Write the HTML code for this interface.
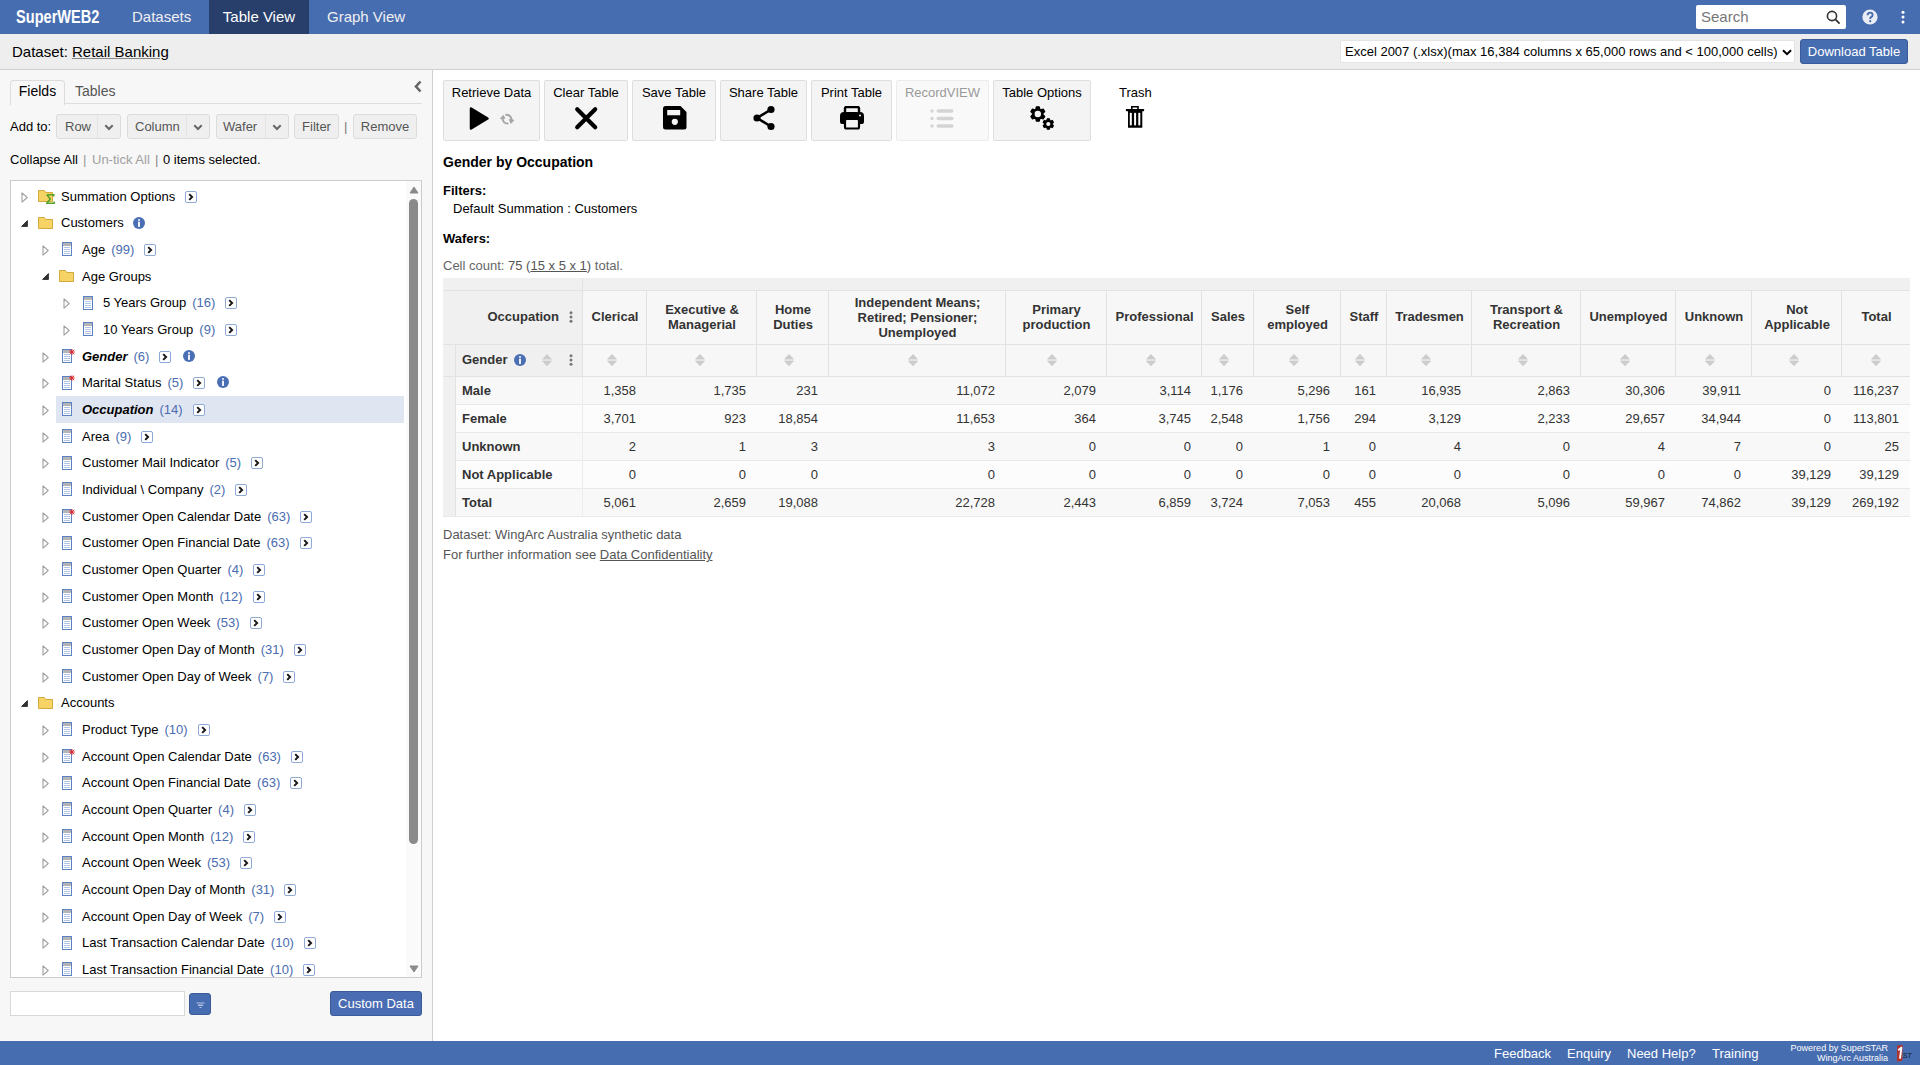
<!DOCTYPE html>
<html><head><meta charset="utf-8"><style>
*{box-sizing:border-box}
html,body{margin:0;padding:0;width:1920px;height:1065px;overflow:hidden;font-family:"Liberation Sans",sans-serif;font-size:13px;color:#000;background:#fff}
.a{position:absolute;white-space:nowrap}
#hdr{position:absolute;left:0;top:0;width:1920px;height:34px;background:#476db1}
#logo{position:absolute;left:16px;top:6px;font-size:18px;font-weight:bold;color:#fff;transform:scaleX(0.81);transform-origin:0 0;white-space:nowrap;line-height:22px}
.nav{position:absolute;top:0;height:34px;line-height:34px;font-size:15px;color:#f0f0f0;white-space:nowrap}
#search{position:absolute;left:1696px;top:5px;width:150px;height:24px;background:#fff;border-radius:2px}
#search span{position:absolute;left:5px;top:4px;font-size:15px;color:#777;line-height:16px}
#dbar{position:absolute;left:0;top:34px;width:1920px;height:36px;background:#eeeeee;border-bottom:1px solid #cfcfcf}
#dbar .ds{position:absolute;left:12px;top:9px;font-size:15px;line-height:18px;white-space:nowrap}
#dbar .ds u{text-decoration:underline;text-decoration-color:#888;text-underline-offset:1px}
#sel{position:absolute;left:1340px;top:5.5px;width:455px;height:23.5px;background:#fff;border:1px solid #e4e4e4;border-radius:2px;font-size:13px;line-height:22.5px;padding-left:4px;white-space:nowrap}
#dlbtn{position:absolute;left:1800px;top:5px;width:108px;height:25px;background:#476db1;border:1px solid #3a5a9a;border-radius:3px;color:#fff;font-size:13px;line-height:23px;text-align:center;white-space:nowrap}
#left{position:absolute;left:0;top:70px;width:433px;height:971px;background:#f7f7f7;border-right:1px solid #d0d0d0}
#right{position:absolute;left:433px;top:70px;width:1487px;height:970px;background:#fff}
#ftr{position:absolute;left:0;top:1041px;width:1920px;height:24px;background:#476db1}
.ftl{position:absolute;top:0;height:24px;line-height:25px;color:#fff;font-size:13px;white-space:nowrap}
.tab{position:absolute;top:10px;height:24px;line-height:21px;font-size:14px}
.sbtn{position:absolute;top:44px;height:25px;background:#efefef;border:1px solid #dcdcdc;border-radius:3px;color:#555;font-size:13px;line-height:23px;text-align:center}
#tree{position:absolute;left:10px;top:110px;width:412px;height:798px;background:#fff;border:1px solid #cccccc;overflow:hidden}
.row{position:absolute;left:0;width:395px;height:26.6667px;line-height:26.6667px;font-size:13px;white-space:nowrap}
.row .t{position:absolute;top:0.5px}
.row .c{color:#4a6cb0;margin-left:6px}
.row svg{position:absolute}
.th{font-weight:bold;color:#333;text-align:center;white-space:nowrap}
.td{height:28px;line-height:29px;color:#333;white-space:nowrap}
.tbtn{border-radius:2px;font-size:13px}
</style></head><body>
<svg width="0" height="0" style="position:absolute">
<defs>
<symbol id="tri-o" viewBox="0 0 7 11"><path d="M1 0.9 L6.2 5.5 L1 10.1 Z" fill="none" stroke="#a0a0a0" stroke-width="1.1" stroke-linejoin="round"/></symbol>
<symbol id="tri-f" viewBox="0 0 7 7"><path d="M0.6 6.4 L6.4 6.4 L6.4 0.6 Z" fill="#333" stroke="#333" stroke-width="1" stroke-linejoin="round"/></symbol>
<symbol id="fold" viewBox="0 0 15 12"><path d="M0.5 0.5 H6.3 L7.8 2.5 H14.5 V11.5 H0.5 Z" fill="#f6d365" stroke="#d2a93a" stroke-width="1"/></symbol>
<symbol id="fld" viewBox="0 0 10 14"><rect x="0.5" y="0.5" width="9" height="13" fill="#fff" stroke="#5b80c4"/><rect x="1" y="1" width="8" height="3" fill="#b4b4b4"/><path d="M2 5.5H8M2 7.5H8M2 9.5H8M2 11.5H8" stroke="#9fb6e0" stroke-width="0.8"/></symbol>
<symbol id="ast" viewBox="0 0 6 6"><path d="M3 0.2V5.8M0.2 3H5.8M0.8 0.8L5.2 5.2M5.2 0.8L0.8 5.2" stroke="#e32222" stroke-width="0.9"/><circle cx="3" cy="3" r="1.1" fill="#e32222"/></symbol>
<symbol id="btn" viewBox="0 0 12 12"><rect x="0.5" y="0.5" width="11" height="11" rx="1.5" fill="#fff" stroke="#8ea8d8"/><path d="M4.2 3.1 L7.1 6 L4.2 8.9" fill="none" stroke="#1a1a1a" stroke-width="2"/></symbol>
<symbol id="info" viewBox="0 0 12 12"><circle cx="6" cy="6" r="6" fill="#4a6fb5"/><rect x="5.1" y="2.2" width="1.8" height="1.6" fill="#fff"/><rect x="5.1" y="4.7" width="1.8" height="5.2" fill="#fff"/></symbol>
<symbol id="sort" viewBox="0 0 10 12"><rect x="0.3" y="5.3" width="9.4" height="1.6" fill="#e3e3e3"/><path d="M5 0 L10 5.3 H0 Z M0 6.9 H10 L5 12.2 Z" fill="#cccccc"/></symbol>
<symbol id="kebab" viewBox="0 0 4 12"><circle cx="2" cy="1.7" r="1.5" fill="#777"/><circle cx="2" cy="6" r="1.5" fill="#777"/><circle cx="2" cy="10.3" r="1.5" fill="#777"/></symbol>
</defs></svg>
<div id="hdr">
  <div id="logo">SuperWEB2</div>
  <div class="nav" style="left:132px">Datasets</div>
  <div class="nav" style="left:209px;width:100px;background:#283f6b;text-align:center;color:#fff">Table View</div>
  <div class="nav" style="left:327px">Graph View</div>
  <div id="search"><span>Search</span><svg class="a" style="left:130px;top:5px" width="15" height="15" viewBox="0 0 15 15"><circle cx="6" cy="6" r="4.6" fill="none" stroke="#333" stroke-width="1.6"/><path d="M9.4 9.4 L13.6 13.6" stroke="#333" stroke-width="1.8"/></svg></div>
  <svg class="a" style="left:1862px;top:9px" width="16" height="16" viewBox="0 0 16 16"><circle cx="8" cy="8" r="7.6" fill="#e9edf6"/><path d="M5.6 6.2 Q5.6 3.6 8.1 3.6 Q10.6 3.6 10.6 5.9 Q10.6 7.3 9.1 8.1 Q8.2 8.6 8.2 9.9" fill="none" stroke="#476db1" stroke-width="1.9"/><circle cx="8.2" cy="12.2" r="1.1" fill="#476db1"/></svg>
  <svg class="a" style="left:1901px;top:10px" width="4" height="14" viewBox="0 0 4 14"><circle cx="2" cy="2.3" r="1.5" fill="#fff"/><circle cx="2" cy="7.1" r="1.5" fill="#fff"/><circle cx="2" cy="11.9" r="1.5" fill="#fff"/></svg>
</div>
<div id="dbar">
  <div class="ds">Dataset: <u>Retail Banking</u></div>
  <div id="sel">Excel 2007 (.xlsx)(max 16,384 columns x 65,000 rows and &lt; 100,000 cells)<svg class="a" style="left:441px;top:8px" width="10" height="7" viewBox="0 0 10 7"><path d="M1 1.2 L5 5.2 L9 1.2" fill="none" stroke="#000" stroke-width="2"/></svg></div>
  <div id="dlbtn">Download Table</div>
</div>

<div id="left">
 <div class="a" style="left:10px;top:33px;width:412px;height:1px;background:#dedede"></div>
 <div class="tab" style="left:10px;width:55px;border:1px solid #dcdcdc;border-bottom:none;border-radius:4px 4px 0 0;background:#f7f7f7;text-align:center;height:25px">Fields</div>
 <div class="tab" style="left:75px;top:11px;color:#555">Tables</div>
 <svg class="a" style="left:413px;top:10px" width="10" height="13" viewBox="0 0 10 13"><path d="M7.5 1.5 L3 6.5 L7.5 11.5" fill="none" stroke="#666" stroke-width="2.6"/></svg>
 <div class="a" style="left:10px;top:44px;line-height:25px">Add to:</div>
 <div class="sbtn" style="left:56px;width:65px"><span style="position:absolute;left:8px">Row</span><span style="position:absolute;left:40px;top:-1px;width:1px;height:25px;background:#e3e3e3"></span><svg style="position:absolute;left:47px;top:9px" width="10" height="7" viewBox="0 0 10 7"><path d="M1.3 1.3 L5 5 L8.7 1.3" fill="none" stroke="#666" stroke-width="2"/></svg></div>
 <div class="sbtn" style="left:127px;width:83px"><span style="position:absolute;left:7px">Column</span><span style="position:absolute;left:58px;top:-1px;width:1px;height:25px;background:#e3e3e3"></span><svg style="position:absolute;left:65px;top:9px" width="10" height="7" viewBox="0 0 10 7"><path d="M1.3 1.3 L5 5 L8.7 1.3" fill="none" stroke="#666" stroke-width="2"/></svg></div>
 <div class="sbtn" style="left:216px;width:73px"><span style="position:absolute;left:6px">Wafer</span><span style="position:absolute;left:48px;top:-1px;width:1px;height:25px;background:#e3e3e3"></span><svg style="position:absolute;left:55px;top:9px" width="10" height="7" viewBox="0 0 10 7"><path d="M1.3 1.3 L5 5 L8.7 1.3" fill="none" stroke="#666" stroke-width="2"/></svg></div>
 <div class="sbtn" style="left:294px;width:45px">Filter</div>
 <div class="a" style="left:344px;top:44px;line-height:25px;color:#777">|</div>
 <div class="sbtn" style="left:353px;width:64px">Remove</div>
 <div class="a" style="left:10px;top:81px;line-height:18px">Collapse All</div><div class="a" style="left:83px;top:81px;line-height:18px;color:#999">|</div><div class="a" style="left:92px;top:81px;line-height:18px;color:#a0a0a0">Un-tick All</div><div class="a" style="left:155px;top:81px;line-height:18px;color:#888">|</div><div class="a" style="left:163px;top:81px;line-height:18px">0 items selected.</div>
 <div id="tree">
 <div class="row" style="top:2.0000px"><svg style="left:9.5px;top:8.8px" width="7" height="11"><use href="#tri-o"/></svg><svg style="left:27px;top:7.2px" width="15" height="12"><use href="#fold"/></svg><svg style="left:34.5px;top:10.5px" width="9" height="10" viewBox="0 0 9 10"><path d="M0.8 0.8H7.8V2.4M0.8 0.8L4.3 5L0.8 9.2H8.2V7.4" fill="none" stroke="#55a02a" stroke-width="1.5"/></svg><div class="t" style="left:50px"><span style="">Summation Options</span><svg width="12" height="12" style="position:relative;display:inline-block;vertical-align:-2px;margin-left:10px"><use href="#btn"/></svg></div></div>
<div class="row" style="top:28.6667px"><svg style="left:10px;top:10.3px" width="7" height="7"><use href="#tri-f"/></svg><svg style="left:27px;top:7.2px" width="15" height="12"><use href="#fold"/></svg><div class="t" style="left:50px"><span style="">Customers</span><svg width="12" height="12" style="position:relative;display:inline-block;vertical-align:-2px;margin-left:9px"><use href="#info"/></svg></div></div>
<div class="row" style="top:55.3334px"><svg style="left:30.5px;top:8.8px" width="7" height="11"><use href="#tri-o"/></svg><svg style="left:51px;top:6px" width="10" height="14"><use href="#fld"/></svg><div class="t" style="left:71px"><span style="">Age</span><span class="c">(99)</span><svg width="12" height="12" style="position:relative;display:inline-block;vertical-align:-2px;margin-left:10px"><use href="#btn"/></svg></div></div>
<div class="row" style="top:82.0001px"><svg style="left:31px;top:10.3px" width="7" height="7"><use href="#tri-f"/></svg><svg style="left:48px;top:7.2px" width="15" height="12"><use href="#fold"/></svg><div class="t" style="left:71px"><span style="">Age Groups</span></div></div>
<div class="row" style="top:108.6668px"><svg style="left:51.5px;top:8.8px" width="7" height="11"><use href="#tri-o"/></svg><svg style="left:72px;top:6px" width="10" height="14"><use href="#fld"/></svg><div class="t" style="left:92px"><span style="">5 Years Group</span><span class="c">(16)</span><svg width="12" height="12" style="position:relative;display:inline-block;vertical-align:-2px;margin-left:10px"><use href="#btn"/></svg></div></div>
<div class="row" style="top:135.3335px"><svg style="left:51.5px;top:8.8px" width="7" height="11"><use href="#tri-o"/></svg><svg style="left:72px;top:6px" width="10" height="14"><use href="#fld"/></svg><div class="t" style="left:92px"><span style="">10 Years Group</span><span class="c">(9)</span><svg width="12" height="12" style="position:relative;display:inline-block;vertical-align:-2px;margin-left:10px"><use href="#btn"/></svg></div></div>
<div class="row" style="top:162.0002px"><svg style="left:30.5px;top:8.8px" width="7" height="11"><use href="#tri-o"/></svg><svg style="left:51px;top:6px" width="10" height="14"><use href="#fld"/></svg><svg style="left:58px;top:5.6px" width="6" height="6"><use href="#ast"/></svg><div class="t" style="left:71px"><span style="font-weight:bold;font-style:italic;">Gender</span><span class="c">(6)</span><svg width="12" height="12" style="position:relative;display:inline-block;vertical-align:-2px;margin-left:10px"><use href="#btn"/></svg><svg width="12" height="12" style="position:relative;display:inline-block;vertical-align:-1px;margin-left:12px"><use href="#info"/></svg></div></div>
<div class="row" style="top:188.6669px"><svg style="left:30.5px;top:8.8px" width="7" height="11"><use href="#tri-o"/></svg><svg style="left:51px;top:6px" width="10" height="14"><use href="#fld"/></svg><svg style="left:58px;top:5.6px" width="6" height="6"><use href="#ast"/></svg><div class="t" style="left:71px"><span style="">Marital Status</span><span class="c">(5)</span><svg width="12" height="12" style="position:relative;display:inline-block;vertical-align:-2px;margin-left:10px"><use href="#btn"/></svg><svg width="12" height="12" style="position:relative;display:inline-block;vertical-align:-1px;margin-left:12px"><use href="#info"/></svg></div></div>
<div class="row" style="top:215.3336px"><div style="position:absolute;left:45px;top:-0.3335999999999899px;width:348px;height:26.5px;background:#dfe6f2"></div><svg style="left:30.5px;top:8.8px" width="7" height="11"><use href="#tri-o"/></svg><svg style="left:51px;top:6px" width="10" height="14"><use href="#fld"/></svg><div class="t" style="left:71px"><span style="font-weight:bold;font-style:italic;">Occupation</span><span class="c">(14)</span><svg width="12" height="12" style="position:relative;display:inline-block;vertical-align:-2px;margin-left:10px"><use href="#btn"/></svg></div></div>
<div class="row" style="top:242.0003px"><svg style="left:30.5px;top:8.8px" width="7" height="11"><use href="#tri-o"/></svg><svg style="left:51px;top:6px" width="10" height="14"><use href="#fld"/></svg><div class="t" style="left:71px"><span style="">Area</span><span class="c">(9)</span><svg width="12" height="12" style="position:relative;display:inline-block;vertical-align:-2px;margin-left:10px"><use href="#btn"/></svg></div></div>
<div class="row" style="top:268.6670px"><svg style="left:30.5px;top:8.8px" width="7" height="11"><use href="#tri-o"/></svg><svg style="left:51px;top:6px" width="10" height="14"><use href="#fld"/></svg><div class="t" style="left:71px"><span style="">Customer Mail Indicator</span><span class="c">(5)</span><svg width="12" height="12" style="position:relative;display:inline-block;vertical-align:-2px;margin-left:10px"><use href="#btn"/></svg></div></div>
<div class="row" style="top:295.3337px"><svg style="left:30.5px;top:8.8px" width="7" height="11"><use href="#tri-o"/></svg><svg style="left:51px;top:6px" width="10" height="14"><use href="#fld"/></svg><div class="t" style="left:71px"><span style="">Individual \ Company</span><span class="c">(2)</span><svg width="12" height="12" style="position:relative;display:inline-block;vertical-align:-2px;margin-left:10px"><use href="#btn"/></svg></div></div>
<div class="row" style="top:322.0004px"><svg style="left:30.5px;top:8.8px" width="7" height="11"><use href="#tri-o"/></svg><svg style="left:51px;top:6px" width="10" height="14"><use href="#fld"/></svg><svg style="left:58px;top:5.6px" width="6" height="6"><use href="#ast"/></svg><div class="t" style="left:71px"><span style="">Customer Open Calendar Date</span><span class="c">(63)</span><svg width="12" height="12" style="position:relative;display:inline-block;vertical-align:-2px;margin-left:10px"><use href="#btn"/></svg></div></div>
<div class="row" style="top:348.6671px"><svg style="left:30.5px;top:8.8px" width="7" height="11"><use href="#tri-o"/></svg><svg style="left:51px;top:6px" width="10" height="14"><use href="#fld"/></svg><div class="t" style="left:71px"><span style="">Customer Open Financial Date</span><span class="c">(63)</span><svg width="12" height="12" style="position:relative;display:inline-block;vertical-align:-2px;margin-left:10px"><use href="#btn"/></svg></div></div>
<div class="row" style="top:375.3338px"><svg style="left:30.5px;top:8.8px" width="7" height="11"><use href="#tri-o"/></svg><svg style="left:51px;top:6px" width="10" height="14"><use href="#fld"/></svg><div class="t" style="left:71px"><span style="">Customer Open Quarter</span><span class="c">(4)</span><svg width="12" height="12" style="position:relative;display:inline-block;vertical-align:-2px;margin-left:10px"><use href="#btn"/></svg></div></div>
<div class="row" style="top:402.0005px"><svg style="left:30.5px;top:8.8px" width="7" height="11"><use href="#tri-o"/></svg><svg style="left:51px;top:6px" width="10" height="14"><use href="#fld"/></svg><div class="t" style="left:71px"><span style="">Customer Open Month</span><span class="c">(12)</span><svg width="12" height="12" style="position:relative;display:inline-block;vertical-align:-2px;margin-left:10px"><use href="#btn"/></svg></div></div>
<div class="row" style="top:428.6672px"><svg style="left:30.5px;top:8.8px" width="7" height="11"><use href="#tri-o"/></svg><svg style="left:51px;top:6px" width="10" height="14"><use href="#fld"/></svg><div class="t" style="left:71px"><span style="">Customer Open Week</span><span class="c">(53)</span><svg width="12" height="12" style="position:relative;display:inline-block;vertical-align:-2px;margin-left:10px"><use href="#btn"/></svg></div></div>
<div class="row" style="top:455.3339px"><svg style="left:30.5px;top:8.8px" width="7" height="11"><use href="#tri-o"/></svg><svg style="left:51px;top:6px" width="10" height="14"><use href="#fld"/></svg><div class="t" style="left:71px"><span style="">Customer Open Day of Month</span><span class="c">(31)</span><svg width="12" height="12" style="position:relative;display:inline-block;vertical-align:-2px;margin-left:10px"><use href="#btn"/></svg></div></div>
<div class="row" style="top:482.0006px"><svg style="left:30.5px;top:8.8px" width="7" height="11"><use href="#tri-o"/></svg><svg style="left:51px;top:6px" width="10" height="14"><use href="#fld"/></svg><div class="t" style="left:71px"><span style="">Customer Open Day of Week</span><span class="c">(7)</span><svg width="12" height="12" style="position:relative;display:inline-block;vertical-align:-2px;margin-left:10px"><use href="#btn"/></svg></div></div>
<div class="row" style="top:508.6673px"><svg style="left:10px;top:10.3px" width="7" height="7"><use href="#tri-f"/></svg><svg style="left:27px;top:7.2px" width="15" height="12"><use href="#fold"/></svg><div class="t" style="left:50px"><span style="">Accounts</span></div></div>
<div class="row" style="top:535.3340px"><svg style="left:30.5px;top:8.8px" width="7" height="11"><use href="#tri-o"/></svg><svg style="left:51px;top:6px" width="10" height="14"><use href="#fld"/></svg><div class="t" style="left:71px"><span style="">Product Type</span><span class="c">(10)</span><svg width="12" height="12" style="position:relative;display:inline-block;vertical-align:-2px;margin-left:10px"><use href="#btn"/></svg></div></div>
<div class="row" style="top:562.0007px"><svg style="left:30.5px;top:8.8px" width="7" height="11"><use href="#tri-o"/></svg><svg style="left:51px;top:6px" width="10" height="14"><use href="#fld"/></svg><svg style="left:58px;top:5.6px" width="6" height="6"><use href="#ast"/></svg><div class="t" style="left:71px"><span style="">Account Open Calendar Date</span><span class="c">(63)</span><svg width="12" height="12" style="position:relative;display:inline-block;vertical-align:-2px;margin-left:10px"><use href="#btn"/></svg></div></div>
<div class="row" style="top:588.6674px"><svg style="left:30.5px;top:8.8px" width="7" height="11"><use href="#tri-o"/></svg><svg style="left:51px;top:6px" width="10" height="14"><use href="#fld"/></svg><div class="t" style="left:71px"><span style="">Account Open Financial Date</span><span class="c">(63)</span><svg width="12" height="12" style="position:relative;display:inline-block;vertical-align:-2px;margin-left:10px"><use href="#btn"/></svg></div></div>
<div class="row" style="top:615.3341px"><svg style="left:30.5px;top:8.8px" width="7" height="11"><use href="#tri-o"/></svg><svg style="left:51px;top:6px" width="10" height="14"><use href="#fld"/></svg><div class="t" style="left:71px"><span style="">Account Open Quarter</span><span class="c">(4)</span><svg width="12" height="12" style="position:relative;display:inline-block;vertical-align:-2px;margin-left:10px"><use href="#btn"/></svg></div></div>
<div class="row" style="top:642.0008px"><svg style="left:30.5px;top:8.8px" width="7" height="11"><use href="#tri-o"/></svg><svg style="left:51px;top:6px" width="10" height="14"><use href="#fld"/></svg><div class="t" style="left:71px"><span style="">Account Open Month</span><span class="c">(12)</span><svg width="12" height="12" style="position:relative;display:inline-block;vertical-align:-2px;margin-left:10px"><use href="#btn"/></svg></div></div>
<div class="row" style="top:668.6675px"><svg style="left:30.5px;top:8.8px" width="7" height="11"><use href="#tri-o"/></svg><svg style="left:51px;top:6px" width="10" height="14"><use href="#fld"/></svg><div class="t" style="left:71px"><span style="">Account Open Week</span><span class="c">(53)</span><svg width="12" height="12" style="position:relative;display:inline-block;vertical-align:-2px;margin-left:10px"><use href="#btn"/></svg></div></div>
<div class="row" style="top:695.3342px"><svg style="left:30.5px;top:8.8px" width="7" height="11"><use href="#tri-o"/></svg><svg style="left:51px;top:6px" width="10" height="14"><use href="#fld"/></svg><div class="t" style="left:71px"><span style="">Account Open Day of Month</span><span class="c">(31)</span><svg width="12" height="12" style="position:relative;display:inline-block;vertical-align:-2px;margin-left:10px"><use href="#btn"/></svg></div></div>
<div class="row" style="top:722.0009px"><svg style="left:30.5px;top:8.8px" width="7" height="11"><use href="#tri-o"/></svg><svg style="left:51px;top:6px" width="10" height="14"><use href="#fld"/></svg><div class="t" style="left:71px"><span style="">Account Open Day of Week</span><span class="c">(7)</span><svg width="12" height="12" style="position:relative;display:inline-block;vertical-align:-2px;margin-left:10px"><use href="#btn"/></svg></div></div>
<div class="row" style="top:748.6676px"><svg style="left:30.5px;top:8.8px" width="7" height="11"><use href="#tri-o"/></svg><svg style="left:51px;top:6px" width="10" height="14"><use href="#fld"/></svg><div class="t" style="left:71px"><span style="">Last Transaction Calendar Date</span><span class="c">(10)</span><svg width="12" height="12" style="position:relative;display:inline-block;vertical-align:-2px;margin-left:10px"><use href="#btn"/></svg></div></div>
<div class="row" style="top:775.3343px"><svg style="left:30.5px;top:8.8px" width="7" height="11"><use href="#tri-o"/></svg><svg style="left:51px;top:6px" width="10" height="14"><use href="#fld"/></svg><div class="t" style="left:71px"><span style="">Last Transaction Financial Date</span><span class="c">(10)</span><svg width="12" height="12" style="position:relative;display:inline-block;vertical-align:-2px;margin-left:10px"><use href="#btn"/></svg></div></div>
 <div class="a" style="left:395px;top:0;width:15px;height:796px;background:#fafafa"></div>
 <svg class="a" style="left:398px;top:5px" width="10" height="8" viewBox="0 0 10 8"><path d="M5 1 L9 7 H1 Z" fill="#8a8a8a" stroke="#8a8a8a" stroke-linejoin="round"/></svg>
 <div class="a" style="left:398px;top:18px;width:9px;height:645px;background:#8a8a8a;border-radius:4.5px"></div>
 <svg class="a" style="left:398px;top:784px" width="10" height="8" viewBox="0 0 10 8"><path d="M1 1 H9 L5 7 Z" fill="#8a8a8a" stroke="#8a8a8a" stroke-linejoin="round"/></svg>
 </div>
 <div class="a" style="left:10px;top:921px;width:175px;height:25px;background:#fff;border:1px solid #d8d8d8"></div>
 <div class="a" style="left:189px;top:923px;width:22px;height:22px;background:#476db1;border-radius:3px;border:1px solid #3a5a9a"><svg class="a" style="left:6px;top:8px" width="9" height="7" viewBox="0 0 9 7"><path d="M0.5 0.5H8.5V1.5H0.5Z M2 2.5H7V4H2Z M3.5 5H5.5V6H3.5Z" fill="#b0c2e4"/></svg></div>
 <div class="a" style="left:330px;top:921px;width:92px;height:25px;background:#4a6cb2;border:1px solid #3a5a9a;border-radius:3px;color:#fff;text-align:center;line-height:23px">Custom Data</div>
</div>
<div id="right"></div>

<div class="a tbtn" style="left:443px;top:80px;width:97px;height:61px;background:#f4f4f4;border:1px solid #dedede;color:#000"><div style="position:absolute;left:0;right:0;top:4px;text-align:center;line-height:15px">Retrieve Data</div><svg class="a" style="left:24px;top:25px" width="22" height="25" viewBox="0 0 22 25"><path d="M3 2.5 L19.5 12.5 L3 22.5 Z" fill="#000" stroke="#000" stroke-width="2.5" stroke-linejoin="round"/></svg><svg class="a" style="left:56px;top:32px" width="15" height="12" viewBox="0 0 15 12"><path d="M6.2 1.7 Q10.8 1.6 11.6 6.6" fill="none" stroke="#a6a6a6" stroke-width="1.9" stroke-linecap="round"/><path d="M9.2 6.4 L14 7.2 L10.9 10.4 Z" fill="#a6a6a6" stroke="#a6a6a6" stroke-width="0.8" stroke-linejoin="round"/><path d="M7.6 10.5 Q3.1 10.5 2.5 5.5" fill="none" stroke="#a6a6a6" stroke-width="1.9" stroke-linecap="round"/><path d="M0.3 5.6 L3.4 2.3 L4.9 5.5 Z" fill="#a6a6a6" stroke="#a6a6a6" stroke-width="0.8" stroke-linejoin="round"/></svg></div>
<div class="a tbtn" style="left:544px;top:80px;width:84px;height:61px;background:#f4f4f4;border:1px solid #dedede;color:#000"><div style="position:absolute;left:0;right:0;top:4px;text-align:center;line-height:15px">Clear Table</div><svg class="a" style="left:29px;top:25px" width="25" height="25" viewBox="0 0 25 25"><path d="M3.2 3.2 L21.2 21.2 M21.2 3.2 L3.2 21.2" stroke="#000" stroke-width="4.2" stroke-linecap="round"/></svg></div>
<div class="a tbtn" style="left:632px;top:80px;width:84px;height:61px;background:#f4f4f4;border:1px solid #dedede;color:#000"><div style="position:absolute;left:0;right:0;top:4px;text-align:center;line-height:15px">Save Table</div><svg class="a" style="left:30px;top:25px" width="24" height="24" viewBox="0 0 24 24"><path d="M0 2.5 Q0 0 2.5 0 H17.5 L23.5 6 V21 Q23.5 23.5 21 23.5 H2.5 Q0 23.5 0 21 Z" fill="#000"/><rect x="4.2" y="4" width="13" height="5.3" rx="0.5" fill="#f4f4f4"/><circle cx="11.8" cy="15.8" r="3.1" fill="#f4f4f4"/></svg></div>
<div class="a tbtn" style="left:720px;top:80px;width:87px;height:61px;background:#f4f4f4;border:1px solid #dedede;color:#000"><div style="position:absolute;left:0;right:0;top:4px;text-align:center;line-height:15px">Share Table</div><svg class="a" style="left:31px;top:24px" width="24" height="26" viewBox="0 0 24 26"><path d="M19 4.5 L5 13 L19 21.5" fill="none" stroke="#000" stroke-width="2.6"/><circle cx="19" cy="4.5" r="3.6" fill="#000"/><circle cx="5" cy="13" r="3.6" fill="#000"/><circle cx="19" cy="21.5" r="3.6" fill="#000"/></svg></div>
<div class="a tbtn" style="left:811px;top:80px;width:81px;height:61px;background:#f4f4f4;border:1px solid #dedede;color:#000"><div style="position:absolute;left:0;right:0;top:4px;text-align:center;line-height:15px">Print Table</div><svg class="a" style="left:27px;top:25px" width="26" height="24" viewBox="0 0 26 24"><path d="M6 6 V2.5 Q6 1 7.5 1 H18.5 Q20 1 20 2.5 V6" fill="none" stroke="#000" stroke-width="2.4"/><path d="M1 10 Q1 6 5 6 H21 Q25 6 25 10 V16 Q25 18 23 18 H3 Q1 18 1 16 Z" fill="#000"/><rect x="6" y="13" width="14" height="9.5" rx="1.5" fill="#f4f4f4" stroke="#000" stroke-width="2.2"/><circle cx="21" cy="9.5" r="1" fill="#f4f4f4"/></svg></div>
<div class="a tbtn" style="left:896px;top:80px;width:93px;height:61px;background:#f9f9f9;border:1px solid #ececec;color:#999"><div style="position:absolute;left:0;right:0;top:4px;text-align:center;line-height:15px">RecordVIEW</div><svg class="a" style="left:33px;top:28px" width="25" height="20" viewBox="0 0 25 20"><g fill="#d4d4d4"><circle cx="2" cy="2" r="1.7"/><circle cx="2" cy="9.5" r="1.7"/><circle cx="2" cy="17" r="1.7"/><rect x="6.5" y="0.3" width="17" height="3.4" rx="1.7"/><rect x="6.5" y="7.8" width="17" height="3.4" rx="1.7"/><rect x="6.5" y="15.3" width="17" height="3.4" rx="1.7"/></g></svg></div>
<div class="a tbtn" style="left:993px;top:80px;width:98px;height:61px;background:#f4f4f4;border:1px solid #dedede;color:#000"><div style="position:absolute;left:0;right:0;top:4px;text-align:center;line-height:15px">Table Options</div><svg class="a" style="left:36px;top:25px" width="26" height="26" viewBox="0 0 26 26"><path d="M5.69 3.47 L6.41 0.83 L9.19 0.83 L9.91 3.47 L10.67 3.90 L13.31 3.21 L14.70 5.62 L12.78 7.56 L12.78 8.44 L14.70 10.38 L13.31 12.79 L10.67 12.10 L9.91 12.53 L9.19 15.17 L6.41 15.17 L5.69 12.53 L4.93 12.10 L2.29 12.79 L0.90 10.38 L2.82 8.44 L2.82 7.56 L0.90 5.62 L2.29 3.21 L4.93 3.90 Z" fill="#000" stroke="#000" stroke-width="1.3" stroke-linejoin="round"/><circle cx="7.8" cy="8" r="4.8" fill="#000"/><circle cx="7.8" cy="8" r="3.2" fill="#f4f4f4"/><path d="M16.78 14.74 L17.29 12.80 L19.31 12.80 L19.82 14.74 L20.36 15.05 L22.30 14.52 L23.31 16.27 L21.89 17.69 L21.89 18.31 L23.31 19.73 L22.30 21.48 L20.36 20.95 L19.82 21.26 L19.31 23.20 L17.29 23.20 L16.78 21.26 L16.24 20.95 L14.30 21.48 L13.29 19.73 L14.71 18.31 L14.71 17.69 L13.29 16.27 L14.30 14.52 L16.24 15.05 Z" fill="#000" stroke="#000" stroke-width="1.3" stroke-linejoin="round"/><circle cx="18.3" cy="18" r="3.4" fill="#000"/><circle cx="18.3" cy="18" r="2.1" fill="#f4f4f4"/></svg></div>
<div class="a" style="left:1119px;top:85px;line-height:15px">Trash</div><svg class="a" style="left:1124px;top:105px" width="22" height="24" viewBox="0 0 22 24"><rect x="1.9" y="4" width="18.2" height="2.2" rx="0.6" fill="#000"/><path d="M7.8 4.5 V1.8 H14 V4.5" fill="none" stroke="#000" stroke-width="1.6"/><rect x="4" y="5.5" width="14.3" height="17.3" rx="0.6" fill="#000"/><g fill="#fff"><rect x="5.8" y="7.8" width="2" height="12.8" rx="0.8"/><rect x="10.1" y="7.8" width="2" height="12.8" rx="0.8"/><rect x="14.3" y="7.8" width="2" height="12.8" rx="0.8"/></g></svg>
<div class="a" style="left:443px;top:153px;font-size:14px;font-weight:bold;line-height:18px">Gender by Occupation</div>
<div class="a" style="left:443px;top:182px;font-weight:bold;line-height:18px">Filters:</div>
<div class="a" style="left:453px;top:200px;line-height:18px">Default Summation : Customers</div>
<div class="a" style="left:443px;top:230px;font-weight:bold;line-height:18px">Wafers:</div>
<div class="a" style="left:443px;top:257px;line-height:18px;color:#666">Cell count: <span style="color:#555">75 (<u style="text-underline-offset:1px">15 x 5 x 1</u>)</span> total.</div>
<div class="a" style="left:443px;top:278px;width:1467px;height:12px;background:#f0f0f0"></div>
<div class="a" style="left:443px;top:290px;width:139px;height:54px;background:#f0f0f0"></div>
<div class="a" style="left:582px;top:290px;width:1328px;height:86px;background:#f7f7f7"></div>
<div class="a" style="left:443px;top:344px;width:139px;height:32px;background:#f0f0f0"></div>
<div class="a" style="left:455px;top:376px;width:1455px;height:28px;background:#f8f8f8"></div>
<div class="a" style="left:455px;top:404px;width:1455px;height:28px;background:#fcfcfc"></div>
<div class="a" style="left:455px;top:432px;width:1455px;height:28px;background:#f8f8f8"></div>
<div class="a" style="left:455px;top:460px;width:1455px;height:28px;background:#fcfcfc"></div>
<div class="a" style="left:455px;top:488px;width:1455px;height:28px;background:#f8f8f8"></div>
<div class="a" style="left:443px;top:344px;width:12px;height:172px;background:#f0f0f0"></div>
<div class="a" style="left:443px;top:290px;width:1467px;height:1px;background:#e2e2e2"></div>
<div class="a" style="left:443px;top:344px;width:1467px;height:1px;background:#e2e2e2"></div>
<div class="a" style="left:443px;top:376px;width:1467px;height:1px;background:#e2e2e2"></div>
<div class="a" style="left:455px;top:404px;width:1455px;height:1px;background:#e9e9e9"></div>
<div class="a" style="left:455px;top:432px;width:1455px;height:1px;background:#e9e9e9"></div>
<div class="a" style="left:455px;top:460px;width:1455px;height:1px;background:#e9e9e9"></div>
<div class="a" style="left:455px;top:488px;width:1455px;height:1px;background:#e9e9e9"></div>
<div class="a" style="left:443px;top:516px;width:1467px;height:1px;background:#e9e9e9"></div>
<div class="a" style="left:582px;top:278px;width:1px;height:98px;background:#e2e2e2"></div>
<div class="a" style="left:582px;top:377px;width:1px;height:139px;background:#ececec"></div>
<div class="a" style="left:455px;top:344px;width:1px;height:172px;background:#e2e2e2"></div>
<div class="a" style="left:646px;top:290px;width:1px;height:86px;background:#e2e2e2"></div>
<div class="a" style="left:756px;top:290px;width:1px;height:86px;background:#e2e2e2"></div>
<div class="a" style="left:828px;top:290px;width:1px;height:86px;background:#e2e2e2"></div>
<div class="a" style="left:1005px;top:290px;width:1px;height:86px;background:#e2e2e2"></div>
<div class="a" style="left:1106px;top:290px;width:1px;height:86px;background:#e2e2e2"></div>
<div class="a" style="left:1201px;top:290px;width:1px;height:86px;background:#e2e2e2"></div>
<div class="a" style="left:1253px;top:290px;width:1px;height:86px;background:#e2e2e2"></div>
<div class="a" style="left:1340px;top:290px;width:1px;height:86px;background:#e2e2e2"></div>
<div class="a" style="left:1386px;top:290px;width:1px;height:86px;background:#e2e2e2"></div>
<div class="a" style="left:1471px;top:290px;width:1px;height:86px;background:#e2e2e2"></div>
<div class="a" style="left:1580px;top:290px;width:1px;height:86px;background:#e2e2e2"></div>
<div class="a" style="left:1675px;top:290px;width:1px;height:86px;background:#e2e2e2"></div>
<div class="a" style="left:1751px;top:290px;width:1px;height:86px;background:#e2e2e2"></div>
<div class="a" style="left:1841px;top:290px;width:1px;height:86px;background:#e2e2e2"></div>
<div class="a th" style="left:583px;top:309px;width:64px;line-height:15px">Clerical</div>
<svg class="a" style="left:607px;top:354px" width="10" height="12"><use href="#sort"/></svg>
<div class="a th" style="left:647px;top:302px;width:110px;line-height:15px">Executive &amp;<br>Managerial</div>
<svg class="a" style="left:694.7px;top:354px" width="10" height="12"><use href="#sort"/></svg>
<div class="a th" style="left:757px;top:302px;width:72px;line-height:15px">Home<br>Duties</div>
<svg class="a" style="left:784px;top:354px" width="10" height="12"><use href="#sort"/></svg>
<div class="a th" style="left:829px;top:294.5px;width:177px;line-height:15px">Independent Means;<br>Retired; Pensioner;<br>Unemployed</div>
<svg class="a" style="left:907.9px;top:354px" width="10" height="12"><use href="#sort"/></svg>
<div class="a th" style="left:1006px;top:302px;width:101px;line-height:15px">Primary<br>production</div>
<svg class="a" style="left:1047px;top:354px" width="10" height="12"><use href="#sort"/></svg>
<div class="a th" style="left:1107px;top:309px;width:95px;line-height:15px">Professional</div>
<svg class="a" style="left:1146.25px;top:354px" width="10" height="12"><use href="#sort"/></svg>
<div class="a th" style="left:1202px;top:309px;width:52px;line-height:15px">Sales</div>
<svg class="a" style="left:1219.25px;top:354px" width="10" height="12"><use href="#sort"/></svg>
<div class="a th" style="left:1254px;top:302px;width:87px;line-height:15px">Self<br>employed</div>
<svg class="a" style="left:1289.25px;top:354px" width="10" height="12"><use href="#sort"/></svg>
<div class="a th" style="left:1341px;top:309px;width:46px;line-height:15px">Staff</div>
<svg class="a" style="left:1355px;top:354px" width="10" height="12"><use href="#sort"/></svg>
<div class="a th" style="left:1387px;top:309px;width:85px;line-height:15px">Tradesmen</div>
<svg class="a" style="left:1421.25px;top:354px" width="10" height="12"><use href="#sort"/></svg>
<div class="a th" style="left:1472px;top:302px;width:109px;line-height:15px">Transport &amp;<br>Recreation</div>
<svg class="a" style="left:1517.9px;top:354px" width="10" height="12"><use href="#sort"/></svg>
<div class="a th" style="left:1581px;top:309px;width:95px;line-height:15px">Unemployed</div>
<svg class="a" style="left:1620px;top:354px" width="10" height="12"><use href="#sort"/></svg>
<div class="a th" style="left:1676px;top:309px;width:76px;line-height:15px">Unknown</div>
<svg class="a" style="left:1705.3px;top:354px" width="10" height="12"><use href="#sort"/></svg>
<div class="a th" style="left:1752px;top:302px;width:90px;line-height:15px">Not<br>Applicable</div>
<svg class="a" style="left:1789px;top:354px" width="10" height="12"><use href="#sort"/></svg>
<div class="a th" style="left:1842px;top:309px;width:69px;line-height:15px">Total</div>
<svg class="a" style="left:1871px;top:354px" width="10" height="12"><use href="#sort"/></svg>
<div class="a th" style="left:443px;top:309px;width:116px;text-align:right;line-height:15px">Occupation</div>
<svg class="a" style="left:569px;top:311px" width="4" height="12"><use href="#kebab"/></svg>
<div class="a th" style="left:462px;top:352px;line-height:15px;text-align:left">Gender</div>
<svg class="a" style="left:514px;top:354px" width="12" height="12"><use href="#info"/></svg>
<svg class="a" style="left:542px;top:354px" width="10" height="12"><use href="#sort"/></svg>
<svg class="a" style="left:569px;top:354px" width="4" height="12"><use href="#kebab"/></svg>
<div class="a td" style="left:462px;top:376px;font-weight:bold">Male</div>
<div class="a td" style="left:582px;top:376px;width:54px;text-align:right">1,358</div>
<div class="a td" style="left:646px;top:376px;width:100px;text-align:right">1,735</div>
<div class="a td" style="left:756px;top:376px;width:62px;text-align:right">231</div>
<div class="a td" style="left:828px;top:376px;width:167px;text-align:right">11,072</div>
<div class="a td" style="left:1005px;top:376px;width:91px;text-align:right">2,079</div>
<div class="a td" style="left:1106px;top:376px;width:85px;text-align:right">3,114</div>
<div class="a td" style="left:1201px;top:376px;width:42px;text-align:right">1,176</div>
<div class="a td" style="left:1253px;top:376px;width:77px;text-align:right">5,296</div>
<div class="a td" style="left:1340px;top:376px;width:36px;text-align:right">161</div>
<div class="a td" style="left:1386px;top:376px;width:75px;text-align:right">16,935</div>
<div class="a td" style="left:1471px;top:376px;width:99px;text-align:right">2,863</div>
<div class="a td" style="left:1580px;top:376px;width:85px;text-align:right">30,306</div>
<div class="a td" style="left:1675px;top:376px;width:66px;text-align:right">39,911</div>
<div class="a td" style="left:1751px;top:376px;width:80px;text-align:right">0</div>
<div class="a td" style="left:1841px;top:376px;width:58px;text-align:right">116,237</div>
<div class="a td" style="left:462px;top:404px;font-weight:bold">Female</div>
<div class="a td" style="left:582px;top:404px;width:54px;text-align:right">3,701</div>
<div class="a td" style="left:646px;top:404px;width:100px;text-align:right">923</div>
<div class="a td" style="left:756px;top:404px;width:62px;text-align:right">18,854</div>
<div class="a td" style="left:828px;top:404px;width:167px;text-align:right">11,653</div>
<div class="a td" style="left:1005px;top:404px;width:91px;text-align:right">364</div>
<div class="a td" style="left:1106px;top:404px;width:85px;text-align:right">3,745</div>
<div class="a td" style="left:1201px;top:404px;width:42px;text-align:right">2,548</div>
<div class="a td" style="left:1253px;top:404px;width:77px;text-align:right">1,756</div>
<div class="a td" style="left:1340px;top:404px;width:36px;text-align:right">294</div>
<div class="a td" style="left:1386px;top:404px;width:75px;text-align:right">3,129</div>
<div class="a td" style="left:1471px;top:404px;width:99px;text-align:right">2,233</div>
<div class="a td" style="left:1580px;top:404px;width:85px;text-align:right">29,657</div>
<div class="a td" style="left:1675px;top:404px;width:66px;text-align:right">34,944</div>
<div class="a td" style="left:1751px;top:404px;width:80px;text-align:right">0</div>
<div class="a td" style="left:1841px;top:404px;width:58px;text-align:right">113,801</div>
<div class="a td" style="left:462px;top:432px;font-weight:bold">Unknown</div>
<div class="a td" style="left:582px;top:432px;width:54px;text-align:right">2</div>
<div class="a td" style="left:646px;top:432px;width:100px;text-align:right">1</div>
<div class="a td" style="left:756px;top:432px;width:62px;text-align:right">3</div>
<div class="a td" style="left:828px;top:432px;width:167px;text-align:right">3</div>
<div class="a td" style="left:1005px;top:432px;width:91px;text-align:right">0</div>
<div class="a td" style="left:1106px;top:432px;width:85px;text-align:right">0</div>
<div class="a td" style="left:1201px;top:432px;width:42px;text-align:right">0</div>
<div class="a td" style="left:1253px;top:432px;width:77px;text-align:right">1</div>
<div class="a td" style="left:1340px;top:432px;width:36px;text-align:right">0</div>
<div class="a td" style="left:1386px;top:432px;width:75px;text-align:right">4</div>
<div class="a td" style="left:1471px;top:432px;width:99px;text-align:right">0</div>
<div class="a td" style="left:1580px;top:432px;width:85px;text-align:right">4</div>
<div class="a td" style="left:1675px;top:432px;width:66px;text-align:right">7</div>
<div class="a td" style="left:1751px;top:432px;width:80px;text-align:right">0</div>
<div class="a td" style="left:1841px;top:432px;width:58px;text-align:right">25</div>
<div class="a td" style="left:462px;top:460px;font-weight:bold">Not Applicable</div>
<div class="a td" style="left:582px;top:460px;width:54px;text-align:right">0</div>
<div class="a td" style="left:646px;top:460px;width:100px;text-align:right">0</div>
<div class="a td" style="left:756px;top:460px;width:62px;text-align:right">0</div>
<div class="a td" style="left:828px;top:460px;width:167px;text-align:right">0</div>
<div class="a td" style="left:1005px;top:460px;width:91px;text-align:right">0</div>
<div class="a td" style="left:1106px;top:460px;width:85px;text-align:right">0</div>
<div class="a td" style="left:1201px;top:460px;width:42px;text-align:right">0</div>
<div class="a td" style="left:1253px;top:460px;width:77px;text-align:right">0</div>
<div class="a td" style="left:1340px;top:460px;width:36px;text-align:right">0</div>
<div class="a td" style="left:1386px;top:460px;width:75px;text-align:right">0</div>
<div class="a td" style="left:1471px;top:460px;width:99px;text-align:right">0</div>
<div class="a td" style="left:1580px;top:460px;width:85px;text-align:right">0</div>
<div class="a td" style="left:1675px;top:460px;width:66px;text-align:right">0</div>
<div class="a td" style="left:1751px;top:460px;width:80px;text-align:right">39,129</div>
<div class="a td" style="left:1841px;top:460px;width:58px;text-align:right">39,129</div>
<div class="a td" style="left:462px;top:488px;font-weight:bold">Total</div>
<div class="a td" style="left:582px;top:488px;width:54px;text-align:right">5,061</div>
<div class="a td" style="left:646px;top:488px;width:100px;text-align:right">2,659</div>
<div class="a td" style="left:756px;top:488px;width:62px;text-align:right">19,088</div>
<div class="a td" style="left:828px;top:488px;width:167px;text-align:right">22,728</div>
<div class="a td" style="left:1005px;top:488px;width:91px;text-align:right">2,443</div>
<div class="a td" style="left:1106px;top:488px;width:85px;text-align:right">6,859</div>
<div class="a td" style="left:1201px;top:488px;width:42px;text-align:right">3,724</div>
<div class="a td" style="left:1253px;top:488px;width:77px;text-align:right">7,053</div>
<div class="a td" style="left:1340px;top:488px;width:36px;text-align:right">455</div>
<div class="a td" style="left:1386px;top:488px;width:75px;text-align:right">20,068</div>
<div class="a td" style="left:1471px;top:488px;width:99px;text-align:right">5,096</div>
<div class="a td" style="left:1580px;top:488px;width:85px;text-align:right">59,967</div>
<div class="a td" style="left:1675px;top:488px;width:66px;text-align:right">74,862</div>
<div class="a td" style="left:1751px;top:488px;width:80px;text-align:right">39,129</div>
<div class="a td" style="left:1841px;top:488px;width:58px;text-align:right">269,192</div>
<div class="a" style="left:443px;top:525px;line-height:19px;color:#555">Dataset: WingArc Australia synthetic data</div>
<div class="a" style="left:443px;top:545px;line-height:19px;color:#555">For further information see <u style="text-underline-offset:1px">Data Confidentiality</u></div>

<div id="ftr">
  <div class="ftl" style="left:1494px">Feedback</div>
  <div class="ftl" style="left:1567px">Enquiry</div>
  <div class="ftl" style="left:1627px">Need Help?</div>
  <div class="ftl" style="left:1712px">Training</div>
  <div class="a" style="left:1760px;top:1.5px;width:128px;font-size:9px;line-height:10px;color:#fff;text-align:right">Powered by SuperSTAR<br>WingArc Australia</div>
  <svg class="a" style="left:1895px;top:3px" width="20" height="19" viewBox="0 0 20 19"><path d="M2.2 1.6 L7.6 1 L7.3 16.6 L1.9 17.8 Z" fill="#b3322b"/><path d="M3.3 6.2 L6.3 3.6 L6.4 3.6 L5 14.6" fill="none" stroke="#fff" stroke-width="1.9" stroke-linejoin="round"/><text x="8.4" y="14.4" font-family="Liberation Sans" font-size="8" font-style="italic" fill="#111a2a" transform="scale(0.9 1)">ST</text></svg>
</div>
</body></html>
